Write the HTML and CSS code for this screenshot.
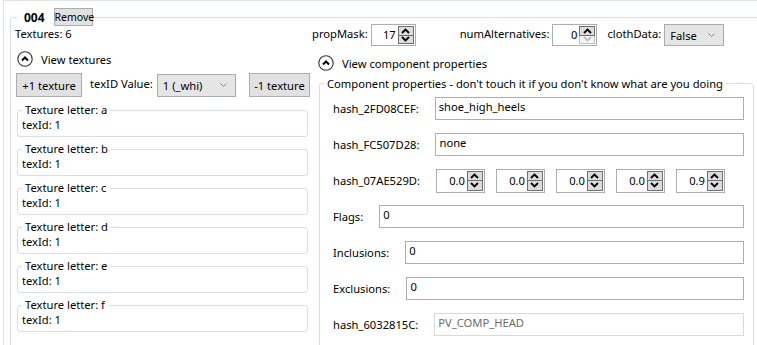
FILE: index.html
```html
<!DOCTYPE html>
<html lang="en">
<head>
    <meta charset="UTF-8">
    <meta name="viewport" content="width=device-width, initial-scale=1.0">
    <title>Component 004</title>
    <link rel="stylesheet" href="styles.css">
</head>
<body>
  <div class="frame">
    <fieldset class="item">
      <legend class="item-head"><span class="item-id">004</span><button class="btn btn-small">Remove</button></legend>
      <div class="item-body">

        <!-- textures -->
        <div class="col-left">
          <div class="count">Textures: 6</div>
          <div class="toggle">
            <svg class="toggle-icon" width="16" height="16" viewBox="0 0 16 16"><circle cx="8" cy="8" r="7.2" fill="#fff" stroke="#333" stroke-width="1.1"/><path d="M5 9.5 L8 6.5 L11 9.5" fill="none" stroke="#000" stroke-width="2"/></svg>
            <span>View textures</span>
          </div>
          <div class="tex-tools">
            <button class="btn btn-tex">+1 texture</button>
            <span class="lbl">texID Value:</span>
            <div class="combo combo-tex"><span>1 (_whi)</span><svg width="7" height="5" viewBox="0 0 7 5"><path d="M0.5 0.5 L3.5 3.5 L6.5 0.5" fill="none" stroke="#888"/></svg></div>
            <button class="btn btn-tex btn-minus">-1 texture</button>
          </div>
          <div class="tex-list">
            <fieldset class="tex"><legend>Texture letter: a</legend><div>texId: 1</div></fieldset>
            <fieldset class="tex"><legend>Texture letter: b</legend><div>texId: 1</div></fieldset>
            <fieldset class="tex"><legend>Texture letter: c</legend><div>texId: 1</div></fieldset>
            <fieldset class="tex"><legend>Texture letter: d</legend><div>texId: 1</div></fieldset>
            <fieldset class="tex"><legend>Texture letter: e</legend><div>texId: 1</div></fieldset>
            <fieldset class="tex"><legend>Texture letter: f</legend><div>texId: 1</div></fieldset>
          </div>
        </div>

        <!-- component -->
        <div class="col-right">
          <div class="top-row">
            <span class="lbl">propMask:</span>
            <div class="num num-top">
              <span class="num-val">17</span>
              <div class="spin">
                <span class="spin-btn"><svg width="9" height="6" viewBox="0 0 9 6"><path d="M1 5 L4.5 1.5 L8 5" fill="none" stroke="#000" stroke-width="1.8"/></svg></span>
                <span class="spin-btn"><svg width="9" height="6" viewBox="0 0 9 6"><path d="M1 1 L4.5 4.5 L8 1" fill="none" stroke="#000" stroke-width="1.8"/></svg></span>
              </div>
            </div>
            <span class="lbl lbl-alt">numAlternatives:</span>
            <div class="num num-top">
              <span class="num-val">0</span>
              <div class="spin">
                <span class="spin-btn"><svg width="9" height="6" viewBox="0 0 9 6"><path d="M1 5 L4.5 1.5 L8 5" fill="none" stroke="#000" stroke-width="1.8"/></svg></span>
                <span class="spin-btn spin-off"><svg width="9" height="6" viewBox="0 0 9 6"><path d="M1 1 L4.5 4.5 L8 1" fill="none" stroke="#bfbfbf" stroke-width="1.8"/></svg></span>
              </div>
            </div>
            <span class="lbl lbl-cloth">clothData:</span>
            <div class="combo combo-cloth"><span>False</span><svg width="7" height="5" viewBox="0 0 7 5"><path d="M0.5 0.5 L3.5 3.5 L6.5 0.5" fill="none" stroke="#888"/></svg></div>
          </div>

          <div class="toggle toggle-comp">
            <svg class="toggle-icon" width="16" height="16" viewBox="0 0 16 16"><circle cx="8" cy="8" r="7.2" fill="#fff" stroke="#333" stroke-width="1.1"/><path d="M5 9.5 L8 6.5 L11 9.5" fill="none" stroke="#000" stroke-width="2"/></svg>
            <span>View component properties</span>
          </div>

          <fieldset class="props">
            <legend>Component properties - don't touch it if you don't know what are you doing</legend>
            <div class="prop-list">
              <div class="prop"><span class="prop-lbl">hash_2FD08CEF:</span><div class="text">shoe_high_heels</div></div>
              <div class="prop"><span class="prop-lbl">hash_FC507D28:</span><div class="text">none</div></div>
              <div class="prop">
                <span class="prop-lbl">hash_07AE529D:</span>
                <div class="vec">
                  <div class="num num-vec"><span class="num-val">0.0</span><div class="spin"><span class="spin-btn"><svg width="9" height="6" viewBox="0 0 9 6"><path d="M1 5 L4.5 1.5 L8 5" fill="none" stroke="#000" stroke-width="1.8"/></svg></span><span class="spin-btn"><svg width="9" height="6" viewBox="0 0 9 6"><path d="M1 1 L4.5 4.5 L8 1" fill="none" stroke="#000" stroke-width="1.8"/></svg></span></div></div>
                  <div class="num num-vec"><span class="num-val">0.0</span><div class="spin"><span class="spin-btn"><svg width="9" height="6" viewBox="0 0 9 6"><path d="M1 5 L4.5 1.5 L8 5" fill="none" stroke="#000" stroke-width="1.8"/></svg></span><span class="spin-btn"><svg width="9" height="6" viewBox="0 0 9 6"><path d="M1 1 L4.5 4.5 L8 1" fill="none" stroke="#000" stroke-width="1.8"/></svg></span></div></div>
                  <div class="num num-vec"><span class="num-val">0.0</span><div class="spin"><span class="spin-btn"><svg width="9" height="6" viewBox="0 0 9 6"><path d="M1 5 L4.5 1.5 L8 5" fill="none" stroke="#000" stroke-width="1.8"/></svg></span><span class="spin-btn"><svg width="9" height="6" viewBox="0 0 9 6"><path d="M1 1 L4.5 4.5 L8 1" fill="none" stroke="#000" stroke-width="1.8"/></svg></span></div></div>
                  <div class="num num-vec"><span class="num-val">0.0</span><div class="spin"><span class="spin-btn"><svg width="9" height="6" viewBox="0 0 9 6"><path d="M1 5 L4.5 1.5 L8 5" fill="none" stroke="#000" stroke-width="1.8"/></svg></span><span class="spin-btn"><svg width="9" height="6" viewBox="0 0 9 6"><path d="M1 1 L4.5 4.5 L8 1" fill="none" stroke="#000" stroke-width="1.8"/></svg></span></div></div>
                  <div class="num num-vec"><span class="num-val">0.9</span><div class="spin"><span class="spin-btn"><svg width="9" height="6" viewBox="0 0 9 6"><path d="M1 5 L4.5 1.5 L8 5" fill="none" stroke="#000" stroke-width="1.8"/></svg></span><span class="spin-btn"><svg width="9" height="6" viewBox="0 0 9 6"><path d="M1 1 L4.5 4.5 L8 1" fill="none" stroke="#000" stroke-width="1.8"/></svg></span></div></div>
                </div>
              </div>
              <div class="prop"><span class="prop-lbl">Flags:</span><div class="text">0</div></div>
              <div class="prop"><span class="prop-lbl">Inclusions:</span><div class="text">0</div></div>
              <div class="prop"><span class="prop-lbl">Exclusions:</span><div class="text">0</div></div>
              <div class="prop"><span class="prop-lbl">hash_6032815C:</span><div class="text text-off">PV_COMP_HEAD</div></div>
            </div>
          </fieldset>
        </div>

      </div>
    </fieldset>
  </div>
</body>
</html>
```

FILE: styles.css
```css
html, body {
  margin: 0;
  height: 100%;
  overflow: hidden;
  background: #fff;
}
body {
  font-family: "Noto Sans", "Open Sans", sans-serif;
  font-size: 11.2px;
  color: #000;
  white-space: nowrap;
}
.frame {
  margin-left: 3px;
  border-top: 1px solid #dde3e8;
  border-left: 1px solid #dde3e8;
  padding-left: 6px;
  height: 100%;
}

/* outer group */
.item {
  margin: 7px 0 0 0;
  padding: 0 4px;
  width: 780px;
  border: 1px solid #d5dfe5;
  border-radius: 3px;
  min-inline-size: 0;
}
.item-head {
  display: flex;
  align-items: center;
  gap: 4px;
  padding: 0 0 0 7px;
  margin-left: 2px;
  height: 18px;
}
.item-id {
  font-weight: bold;
  font-size: 12px;
  padding-right: 5px;
}
.btn {
  font-family: inherit;
  font-size: 11.2px;
  background: #e1e1e1;
  border: 1px solid #adadad;
  color: #000;
  padding: 0;
}
.btn-small {
  font-size: 10.5px;
  height: 18px;
  width: 39px;
  line-height: 15px;
}
.item-body {
  display: grid;
  grid-template-columns: 295px 442px;
  column-gap: 2px;
}

/* left */
.count {
  line-height: 14px;
  padding-top: 1px;
}
.toggle {
  display: flex;
  align-items: center;
  gap: 8px;
  margin-top: 10px;
  margin-left: 2px;
  height: 16px;
}
.tex-tools {
  display: flex;
  align-items: center;
  margin-top: 6px;
  height: 24px;
}
.btn-tex {
  height: 24px;
  width: 67px;
  margin-left: 1px;
}
.btn-minus {
  width: 62px;
  margin-left: 13px;
}
.lbl {
  margin-left: 8px;
  margin-right: 4px;
  align-self: flex-start;
  padding-top: 3px;
}
.combo {
  display: flex;
  align-items: center;
  justify-content: space-between;
  background: #e5e5e5;
  border: 1px solid #acacac;
  box-sizing: border-box;
  padding: 0 8px 0 5px;
}
.combo-tex {
  width: 80px;
  height: 23px;
}
.tex-list {
  display: flex;
  flex-direction: column;
  gap: 5px;
  margin: 6px 2px 0 2px;
}
.tex {
  margin: 0;
  padding: 0 4px 4px 4px;
  border: 1px solid #d5dfe5;
  border-radius: 3px;
  min-inline-size: 0;
}
.tex legend {
  padding: 0 3px;
  line-height: 14px;
}
.tex div {
  line-height: 15px;
}

/* right */
.col-right {
  margin-top: -2px;
}
.top-row {
  display: flex;
  align-items: center;
  height: 22px;
}
.top-row .lbl {
  margin: 0 3px 0 0;
  padding-top: 2px;
}
.top-row .lbl-alt {
  margin-left: 44px;
}
.top-row .lbl-cloth {
  margin-left: 10px;
}
.num {
  display: flex;
  align-items: stretch;
  border: 1px solid #abadb3;
  box-sizing: border-box;
  background: #fff;
  padding: 1px;
}
.num-val {
  flex: 1;
  text-align: right;
  padding-right: 2px;
  line-height: 18px;
}
.num-top {
  width: 45px;
  height: 22px;
}
.spin {
  display: flex;
  flex-direction: column;
  width: 16px;
}
.spin-btn {
  flex: 1;
  display: flex;
  align-items: center;
  justify-content: center;
  background: #dcdcdc;
  border: 1px solid #707070;
}
.spin-btn + .spin-btn {
  border-top: 0;
}
.spin-off {
  background: #f4f4f4;
  border-color: #bfbfbf;
}
.combo-cloth {
  width: 60px;
  height: 22px;
}
.toggle-comp {
  margin-top: 9px;
  margin-left: 6px;
}

.props {
  margin: 5px 0 0 7px;
  padding: 0 0 20px 0;
  border: 1px solid #d5dfe5;
  border-radius: 3px;
  min-inline-size: 0;
}
.props legend {
  margin-left: 4px;
  padding: 0 3px;
  line-height: 15px;
}
.prop-list {
  display: flex;
  flex-direction: column;
  gap: 13px;
  padding: 6px 9px 0 13px;
}
.prop {
  display: flex;
  align-items: center;
  gap: 16px;
  height: 23px;
}
.text {
  flex: 1;
  height: 23px;
  box-sizing: border-box;
  border: 1px solid #abadb3;
  padding: 1px 3px;
  line-height: 15px;
}
.text-off {
  border-color: #d9d9d9;
  color: #6d6d6d;
}
.vec {
  display: flex;
  gap: 11px;
}
.num-vec {
  width: 49px;
  height: 24px;
}
.num-vec .num-val {
  line-height: 20px;
}
```
